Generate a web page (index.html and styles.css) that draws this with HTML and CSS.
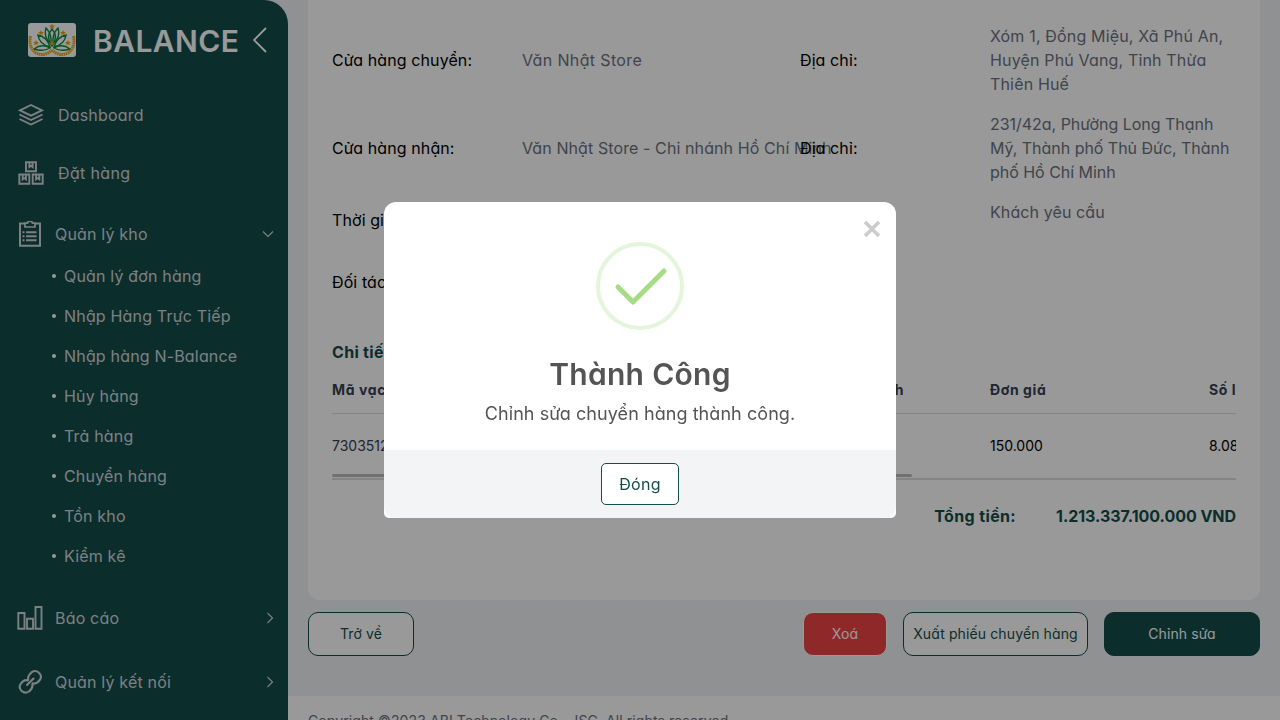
FILE: index.html
```html
<!DOCTYPE html>
<html lang="vi">
<head>
<meta charset="utf-8">
<title>Balance</title>
<link rel="stylesheet" href="styles.css">
</head>
<body>
<div class="layout">
  <aside class="sidebar">
    <div class="brand">
      <svg class="logo" viewBox="0 0 48 34">
        <defs>
          <path id="star" d="M0-3.2 .8-1 3-1 1.3.4 1.9 2.6 0 1.3-1.9 2.6-1.3.4-3-1-.8-1z"/>
        </defs>
        <rect width="48" height="34" rx="3" fill="#fff"/>
        <g fill="none" stroke="#0b8a3e" stroke-width="1.400">
          <path d="M24 6q-7 8 0 17q7-9 0-17z"/>
          <path d="M18 5q-3 9 5 16q1-10-5-16zM30 5q3 9-5 16q-1-10 5-16z"/>
          <path d="M10 12q1 9 12 12q-3-10-12-12zM38 12q-1 9-12 12q3-10 12-12z"/>
          <path d="M6 26q8-6 16-1q-7 4-16 1zM42 26q-8-6-16-1q7 4 16 1z"/>
        </g>
        <g fill="none" stroke="#eaa814" stroke-width="3" stroke-dasharray="1.700 .5">
          <path d="M2.500 13Q0 24 8 30Q17 34 24 27"/>
          <path d="M45.500 13Q48 24 40 30Q31 34 24 27"/>
        </g>
        <g fill="#eda20c">
          <use href="#star" x="24" y="3.600"/><use href="#star" x="13" y="10"/><use href="#star" x="35" y="10"/>
          <use href="#star" x="8" y="20"/><use href="#star" x="40" y="20"/><use href="#star" x="24" y="20.500"/>
        </g>
      </svg>
      <span class="brand-name">BALANCE</span>
      <svg class="collapse" viewBox="0 0 14 26"><path d="M13 1 1 13 13 25" fill="none" stroke="currentColor" stroke-width="1.8"/></svg>
    </div>
    <nav class="menu">
      <a class="item item-link">
        <svg class="icon" viewBox="0 0 26 26"><g fill="none" stroke="currentColor" stroke-width="1.9"><path d="M13 3 24 8.300 13 13.600 2 8.300z"/><path d="M1.500 12.500 13 18 24.500 12.500M1.500 17 13 22.500 24.500 17"/></g></svg>
        <span>Dashboard</span>
      </a>
      <a class="item item-link">
        <svg class="icon" viewBox="0 0 26 26"><g fill="none" stroke="currentColor" stroke-width="1.9"><path d="M8 2.300h10v9H8zM1.300 14.500h10v9.200h-10zM14.700 14.500h10v9.200h-10z"/><path d="M11.400 2.500v4.500l1.600-1.200 1.600 1.200V2.500M4.700 15v4.300l1.600-1.200 1.600 1.200V15M18.100 15v4.300l1.600-1.200 1.600 1.200V15"/></g></svg>
        <span class="wide">Đặt hàng</span>
      </a>
      <a class="item item-parent item-open">
        <svg class="icon" viewBox="0 0 26 26"><g fill="none" stroke="currentColor"><path stroke-width="2" d="M8 2.500H3v22.300h20V2.500h-5"/><path stroke-width="1.700" d="M8 2.200h2.500a2.500 2 0 0 1 5 0H18V6H8z"/><path stroke-width="1.900" d="M5.500 11.300h2M9 11.300h10.500M5.500 15.300h2M9 15.300h10.500M5.500 19.300h2M9 19.300h10.500"/></g></svg>
        <span>Quản lý kho</span>
        <svg class="chevron" viewBox="0 0 12 12"><path d="M1 3.500 6 8.500 11 3.500"/></svg>
      </a>
      <ul class="submenu">
        <li>Quản lý đơn hàng</li>
        <li>Nhập Hàng Trực Tiếp</li>
        <li>Nhập hàng N-Balance</li>
        <li>Hủy hàng</li>
        <li>Trả hàng</li>
        <li>Chuyển hàng</li>
        <li>Tồn kho</li>
        <li>Kiểm kê</li>
      </ul>
      <a class="item item-parent">
        <svg class="icon" viewBox="0 0 26 26"><path fill="none" stroke="currentColor" stroke-width="1.900" d="M1.300 8h6.200v15.800H1.300zM10 13.800h6v10h-6zM18.500 2h6v21.800h-6z"/></svg>
        <span>Báo cáo</span>
        <svg class="chevron side" viewBox="0 0 12 12"><path d="M4.500 1 9.500 6 4.500 11"/></svg>
      </a>
      <a class="item item-parent">
        <svg class="icon" viewBox="0 0 26 26"><g fill="none" stroke="currentColor" stroke-width="2.100" stroke-linecap="round"><path d="M10 16 16.500 9.500"/><path d="M11.200 10.500c-.8-3.500 1.500-5.600 3.500-7.300 5-3.500 11.500 2.300 8.300 7.500-1.800 2.600-4 4.700-7.300 3.600"/><path d="M15.400 15.200c.8 3.500-1.500 5.600-3.500 7.300-5 3.500-11.500-2.300-8.300-7.500 1.800-2.600 4-4.700 7.300-3.600"/></g></svg>
        <span>Quản lý kết nối</span>
        <svg class="chevron side" viewBox="0 0 12 12"><path d="M4.500 1 9.500 6 4.500 11"/></svg>
      </a>
    </nav>
  </aside>
  <main class="main">
    <section class="card">
      <div class="details">
        <b>Cửa hàng chuyển:</b><span class="wide">Văn Nhật Store</span>
        <b>Địa chỉ:</b><span class="address">Xóm 1, Đồng Miệu, Xã Phú An,<br>Huyện Phú Vang, Tỉnh Thừa<br>Thiên Huế</span>
        <b>Cửa hàng nhận:</b><span>Văn Nhật Store - Chi nhánh Hồ Chí Minh</span>
        <b>Địa chỉ:</b><span class="address-narrow">231/42a, Phường Long Thạnh<br>Mỹ, Thành phố Thủ Đức, Thành<br>phố Hồ Chí Minh</span>
        <b>Thời gian:</b><span></span>
        <b></b><span class="reason">Khách yêu cầu</span>
        <b>Đối tác:</b>
      </div>
      <h2 class="section-title">Chi tiết</h2>
      <div class="table">
        <div class="row head"><span>Mã vạch</span><span class="unit">Đơn vị tính</span><span>Đơn giá</span><span>Số lượng</span></div>
        <div class="row"><span class="code">7303512</span><span></span><span>150.000</span><span>8.088.914</span></div>
        <div class="scrollbar"></div>
      </div>
      <div class="total"><span class="wide">Tổng tiền:</span><span class="amount">1.213.337.100.000 VND</span></div>
    </section>
    <div class="actions">
      <button class="btn back">Trở về</button>
      <button class="btn delete">Xoá</button>
      <button class="btn export">Xuất phiếu chuyển hàng</button>
      <button class="btn edit">Chỉnh sửa</button>
    </div>
    <footer class="footer">Copyright ©2023 ABI Technology Co., JSC. All rights reserved</footer>
  </main>
</div>
<div class="overlay">
  <div class="modal">
    <svg class="close" viewBox="0 0 18 18"><path d="M2 2 16 16M16 2 2 16" stroke="#ccc" stroke-width="3.600"/></svg>
    <svg class="success" viewBox="0 0 88 88"><circle cx="44" cy="44" r="42" fill="none" stroke="#e4f5db" stroke-width="4"/><path d="M22 45 37 60 68 29" fill="none" stroke="#a5dc86" stroke-width="5" stroke-linecap="round" stroke-linejoin="round"/></svg>
    <h1 class="modal-title">Thành Công</h1>
    <p class="modal-text">Chỉnh sửa chuyển hàng thành công.</p>
    <div class="modal-footer"><button class="ok">Đóng</button></div>
  </div>
</div>
</body>
</html>
```
FILE: styles.css
```css
* { box-sizing: border-box; }
body {
  margin: 0;
  height: 720px;
  overflow: hidden;
  font: 400 16px/24px Inter, "Noto Sans", sans-serif;
  font-feature-settings: "cv11";
  letter-spacing: 0.1px;
  color: #000;
}
button { font: inherit; font-feature-settings: inherit; letter-spacing: inherit; padding: 0; }
.wide { letter-spacing: 0.36px; }
.layout { display: flex; height: 720px; background: #f0f2f5; }

.sidebar {
  width: 288px;
  flex: none;
  background: #134e4a;
  border-top-right-radius: 24px;
  color: #d1d5db;
  overflow: hidden;
}
.brand { display: flex; align-items: center; height: 80px; padding-left: 28px; color: #fff; }
.logo { width: 48px; height: 34px; }
.brand-name { width: 159px; padding: 1px 0 0 17px; font-size: 30px; font-weight: 600; line-height: 40px; letter-spacing: 0.4px; }
.collapse { width: 14px; height: 26px; margin-left: 18px; }
.menu { padding-top: 6px; letter-spacing: 0.18px; }
.item { display: flex; align-items: center; height: 64px; }
.item-link { height: 58px; padding-left: 18px; gap: 14px; }
.item-parent { padding: 0 14px 0 17px; gap: 12px; }
.item-open { height: 44px; margin-top: 10px; }
.icon { width: 26px; height: 26px; flex: none; }
.chevron { width: 12px; height: 12px; margin-left: auto; fill: none; stroke: currentColor; stroke-width: 1.1; }
.side { margin-right: -1px; }
.submenu { list-style: none; margin: 0 0 10px; padding: 0 0 0 52px; }
.submenu li { display: flex; align-items: center; gap: 8px; height: 40px; }
.submenu li::before { content: ""; width: 4px; height: 4px; border-radius: 50%; background: #fff; }

.main { flex: 1; display: flex; flex-direction: column; min-width: 0; overflow: hidden; }
.card { flex: none; height: 600px; margin: 0 20px 12px; padding: 24px 24px 0; background: #fff; border-radius: 0 0 12px 12px; }
.details {
  display: grid;
  grid-template-columns: 190px 278px 190px 246px;
  grid-template-rows: 72px 72px 40px 52px;
  row-gap: 16px;
  align-items: center;
  white-space: nowrap;
}
.details b { font-weight: 400; position: relative; }
.details span { color: #6b7280; }
.details .address { letter-spacing: 0.16px; }
.details .address-narrow { letter-spacing: -0.03px; }
.details .reason { align-self: start; }
.section-title { margin: 32px 0 0; font-size: 16px; line-height: 24px; font-weight: 700; letter-spacing: 0.3px; color: #134e4a; }
.table { overflow: hidden; white-space: nowrap; font-size: 14px; letter-spacing: 0; border-bottom: 2px solid #dcdcdc; height: 116px; }
.row { display: grid; grid-template-columns: 438px 220px 219px 200px; align-items: center; height: 64px; width: 1077px; }
.head { height: 50px; padding-top: 2px; font-weight: 700; letter-spacing: 0.6px; color: #374151; border-bottom: 1px solid #dcdcdc; }
.unit { width: 134px; text-align: right; }
.code { color: #374151; }
.scrollbar { width: 580px; height: 3px; margin-top: -4px; background: #bdbdbd; border-radius: 2px; }
.total { display: flex; justify-content: flex-end; gap: 40px; margin-top: 24px; font-weight: 700; color: #134e4a; }
.amount { letter-spacing: -0.04px; }
.actions { flex: none; display: flex; gap: 16px; height: 44px; margin: 0 20px 40px; font-size: 14px; letter-spacing: 0.12px; }
.btn { border: 1px solid #134e4a; border-radius: 10px; background: #fff; color: #134e4a; }
.back { width: 106px; margin-right: auto; }
.delete { width: 84px; background: #ef4444; border-color: #fff; color: #fff; }
.export { width: 185px; }
.edit { width: 156px; background: #134e4a; color: #fff; }
.footer { flex: none; height: 50px; padding: 13px 20px; background: #fff; color: #6b7280; font-size: 14px; white-space: nowrap; }

.overlay { position: fixed; inset: 0; display: flex; align-items: center; justify-content: center; background: rgba(0, 0, 0, .4); }
.modal {
  position: relative;
  display: flex;
  flex-direction: column;
  align-items: center;
  width: 512px;
  height: 316px;
  padding-top: 40px;
  background: #fff;
  border-radius: 12px 12px 5px 5px;
  color: #545454;
}
.close { position: absolute; top: 18px; right: 15px; width: 18px; height: 18px; }
.success { width: 88px; height: 88px; }
.modal-title { margin: 24px 0 0; font-size: 30px; font-weight: 600; line-height: 40px; letter-spacing: 0.3px; }
.modal-text { margin: 6px 0 0; font-size: 18px; line-height: 28px; letter-spacing: 0.06px; }
.modal-footer { width: 100%; height: 68px; margin-top: auto; display: flex; align-items: center; justify-content: center; background: #f3f4f6; border-radius: 0 0 12px 12px; }
.ok { width: 78px; height: 42px; border: 1px solid #134e4a; border-radius: 5px; background: #fff; color: #134e4a; letter-spacing: 0.3px; }
```
